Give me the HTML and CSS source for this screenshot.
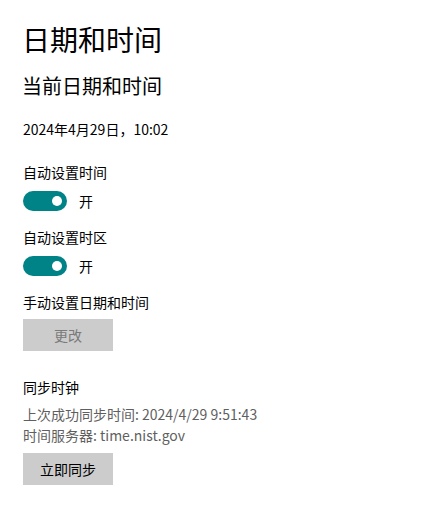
FILE: index.html
```html
<!DOCTYPE html>
<html lang="zh-CN">
<head>
<meta charset="utf-8">
<link rel="stylesheet" href="styles.css">
</head>
<body>
<main class="page">
  <h1 class="title">日期和时间</h1>
  <h2 class="subtitle">当前日期和时间</h2>
  <div class="now">2024年4月29日，10:02</div>

  <div class="label label-first">自动设置时间</div>
  <div class="toggle-row">
    <span class="toggle"><span class="knob"></span></span>
    <span class="toggle-text">开</span>
  </div>

  <div class="label">自动设置时区</div>
  <div class="toggle-row">
    <span class="toggle"><span class="knob"></span></span>
    <span class="toggle-text">开</span>
  </div>

  <div class="label">手动设置日期和时间</div>
  <button class="btn btn-disabled" disabled>更改</button>

  <div class="label label-sync">同步时钟</div>
  <div class="info">
    <div>上次成功同步时间: 2024/4/29 9:51:43</div>
    <div>时间服务器: time.nist.gov</div>
  </div>
  <button class="btn btn-sync">立即同步</button>
</main>
</body>
</html>
```

FILE: styles.css
```css
html, body {
  margin: 0;
  padding: 0;
  background: #ffffff;
}
body {
  font-family: "Noto Sans CJK SC", "Noto Sans", sans-serif;
  color: #000000;
}
.page {
  display: flex;
  flex-direction: column;
  align-items: flex-start;
  padding: 21px 0 0 23px;
}
.title {
  margin: 0;
  font-size: 28px;
  font-weight: 400;
  line-height: 36px;
  margin-left: -1px;
}
.subtitle {
  margin: 15px 0 0 -1px;
  font-size: 20px;
  font-weight: 400;
  line-height: 28px;
}
.now {
  margin-top: 19px;
  font-size: 14px;
  line-height: 20px;
}
.label {
  margin-top: 16px;
  font-size: 14px;
  line-height: 20px;
}
.label-first {
  margin-top: 23px;
}
.toggle-row {
  margin-top: 9px;
  display: flex;
  align-items: center;
  gap: 12px;
  height: 20px;
}
.toggle {
  width: 44px;
  height: 20px;
  border-radius: 10px;
  background: #008387;
  display: flex;
  align-items: center;
  justify-content: flex-end;
  padding-right: 5px;
  box-sizing: border-box;
}
.knob {
  width: 10px;
  height: 10px;
  border-radius: 50%;
  background: #ffffff;
}
.toggle-text {
  font-size: 14px;
  line-height: 20px;
}
.btn {
  margin-top: 7px;
  width: 90px;
  height: 32px;
  border: none;
  background: #cccccc;
  font-family: inherit;
  font-size: 14px;
  color: #000000;
  padding: 0;
}
.btn-disabled {
  color: #7a7a7a;
}
.label-sync {
  margin-top: 26px;
}
.info {
  margin-top: 7px;
  font-size: 14px;
  line-height: 21px;
  color: #5f5f5f;
}
.btn-sync {
  margin-top: 7px;
}
```
